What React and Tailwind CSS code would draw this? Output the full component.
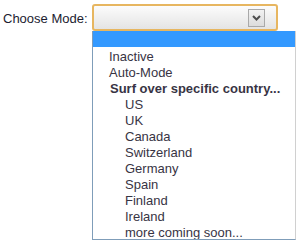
export default function App() {
  const countries = ['US', 'UK', 'Canada', 'Switzerland', 'Germany', 'Spain', 'Finland', 'Ireland', 'more coming soon...'];

  return (
    <div className="relative w-[296px] h-[243px] bg-white overflow-hidden font-['Liberation_Sans',Arial,sans-serif]">
      {/* Label + select */}
      <div className="flex items-start pt-[4px]">
        <label className="ml-[3px] mt-[7px] w-[89px] text-[13px] leading-[16px] text-[#1c1c30]">Choose Mode:</label>
        <div className="w-[186px] h-[27px] rounded-[3px] border-2 border-[#e7b660] bg-gradient-to-b from-[#fcfcfc] to-[#e4e4e4] flex items-center justify-end pr-[11px]">
          <div className="w-[17px] h-[18px] border border-[#a9a9a9] bg-gradient-to-b from-[#f2f2f2] to-[#dcdcdc] flex items-center justify-center">
            <svg width="9" height="6" viewBox="0 0 9 6">
              <path d="M1 1 L4.5 4.5 L8 1" fill="none" stroke="#4d4d4d" strokeWidth="2" />
            </svg>
          </div>
        </div>
      </div>

      {/* Opened dropdown list */}
      <div className="absolute top-[31px] left-[92px] w-[204px] h-[209px] overflow-hidden bg-white border-l border-b border-[#7f9db9] border-r border-r-[#d0d0d0] text-[13px] leading-[16px] text-[#383444]">
        <div className="h-[16px] bg-[#3399ff]" />
        <div className="pt-[2px]">
          <div className="pl-[16px]">Inactive</div>
          <div className="pl-[16px]">Auto-Mode</div>
          <div className="pl-[17px] font-bold">Surf over specific country...</div>
          {countries.map((c) => (
            <div key={c} className="pl-[32px]">{c}</div>
          ))}
        </div>
      </div>
    </div>
  );
}
